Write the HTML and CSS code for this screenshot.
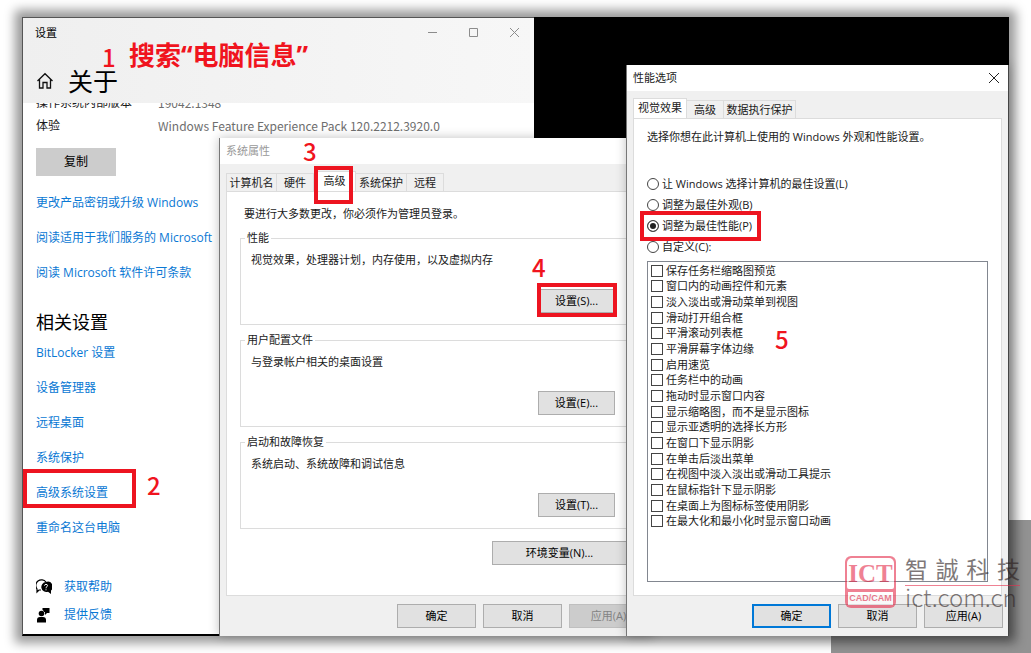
FILE: index.html
```html
<!DOCTYPE html>
<html lang="zh-CN">

<head>
    <meta charset="utf-8">
    <link rel="stylesheet" href="styles.css">
    <title>设置</title>
</head>

<body>
    <div class="backdrop"></div>
    <main class="desktop">
        <section class="settings">
            <header class="settings-head">
                <div class="caption">
                    <span>设置</span>
                    <svg class="controls" width="94" height="12" viewBox="0 0 94 12" fill="none" stroke="#8c8c8c">
                        <path d="M0 5.500H9M41.500 1.500H49.500V9.500H41.500ZM82 1L91 10M91 1L82 10" />
                    </svg>
                </div>
                <div class="heading">
                    <svg width="18" height="18" viewBox="0 0 18 18" fill="none" stroke="#111" stroke-width="1.300">
                        <path d="M1.500 9L9 1.700L16.500 9M3.500 7.500V16H7V10.500H11V16H14.500V7.500" />
                    </svg>
                    <h1>关于</h1>
                </div>
            </header>
            <div class="settings-body">
                <dl class="specs">
                    <dt>操作系统内部版本</dt>
                    <dd>19042.1348</dd>
                    <dt>体验</dt>
                    <dd>Windows Feature Experience Pack 120.2212.3920.0</dd>
                </dl>
                <button class="copy">复制</button>
                <nav class="links">
                    <a href="#">更改产品密钥或升级 Windows</a>
                    <a href="#">阅读适用于我们服务的 Microsoft</a>
                    <a href="#">阅读 Microsoft 软件许可条款</a>
                </nav>
                <h2>相关设置</h2>
                <nav class="links">
                    <a href="#">BitLocker 设置</a>
                    <a href="#">设备管理器</a>
                    <a href="#">远程桌面</a>
                    <a href="#">系统保护</a>
                    <a href="#">高级系统设置</a>
                    <a href="#">重命名这台电脑</a>
                </nav>
                <nav class="help">
                    <a href="#">
                        <svg width="16" height="16" viewBox="0 0 16 16">
                            <path d="M5 11H3L1 13V10A5 5 0 1 1 10 3" fill="none" stroke="#000" stroke-width="1.200" />
                            <path d="M10 3A5 5 0 1 0 12 12.700L15 15V11.500A5 5 0 0 0 10 3Z" fill="#000" />
                            <path d="M8.500 6.700Q8.700 5.300 10 5.300Q11.600 5.400 11.500 6.800Q11.300 7.700 10 8.500V9.300M10 10.300V11.300" fill="none" stroke="#fff" />
                        </svg>
                        获取帮助</a>
                    <a href="#">
                        <svg width="16" height="16" viewBox="0 0 16 16">
                            <path d="M1 15.500V13Q1 10 4 10H7Q10 10 10 13V15.500Z" />
                            <circle cx="5.500" cy="6.500" r="2.800" />
                            <path d="M6.500 1H13.500V6H11L9 8V5H8Q7.700 3.500 6.500 3Z" />
                        </svg>
                        提供反馈</a>
                </nav>
            </div>
        </section>

        <section class="dialog system">
            <header class="title inactive">系统属性</header>
            <div class="tabs" role="tablist">
                <button role="tab" class="tab wide">计算机名</button>
                <button role="tab" class="tab">硬件</button>
                <button role="tab" class="tab active" aria-selected="true">高级</button>
                <button role="tab" class="tab wide">系统保护</button>
                <button role="tab" class="tab">远程</button>
            </div>
            <div class="panel">
                <p class="note">要进行大多数更改，你必须作为管理员登录。</p>
                <fieldset>
                    <legend>性能</legend>
                    <p>视觉效果，处理器计划，内存使用，以及虚拟内存</p>
                    <button class="btn">设置(S)...</button>
                </fieldset>
                <fieldset>
                    <legend>用户配置文件</legend>
                    <p>与登录帐户相关的桌面设置</p>
                    <button class="btn">设置(E)...</button>
                </fieldset>
                <fieldset>
                    <legend>启动和故障恢复</legend>
                    <p>系统启动、系统故障和调试信息</p>
                    <button class="btn">设置(T)...</button>
                </fieldset>
                <button class="btn env">环境变量(N)...</button>
            </div>
            <footer class="actions">
                <button class="btn">确定</button>
                <button class="btn">取消</button>
                <button class="btn" disabled>应用(A)</button>
            </footer>
        </section>

        <section class="dialog performance">
            <header class="title">性能选项
                <svg width="10" height="10" viewBox="0 0 10 10" stroke="#222"><path d="M0 0L10 10M10 0L0 10" /></svg>
            </header>
            <div class="tabs" role="tablist">
                <button role="tab" class="tab active wide" aria-selected="true">视觉效果</button>
                <button role="tab" class="tab">高级</button>
                <button role="tab" class="tab widest">数据执行保护</button>
            </div>
            <div class="panel">
                <p>选择你想在此计算机上使用的 Windows 外观和性能设置。</p>
                <div class="radios">
                    <label><input type="radio" name="fx">让 Windows 选择计算机的最佳设置(L)</label>
                    <label><input type="radio" name="fx">调整为最佳外观(B)</label>
                    <label><input type="radio" name="fx" checked>调整为最佳性能(P)</label>
                    <label><input type="radio" name="fx">自定义(C):</label>
                </div>
                <div class="listbox">
                    <div class="checks">
                        <label><input type="checkbox">保存任务栏缩略图预览</label>
                        <label><input type="checkbox">窗口内的动画控件和元素</label>
                        <label><input type="checkbox">淡入淡出或滑动菜单到视图</label>
                        <label><input type="checkbox">滑动打开组合框</label>
                        <label><input type="checkbox">平滑滚动列表框</label>
                        <label><input type="checkbox">平滑屏幕字体边缘</label>
                        <label><input type="checkbox">启用速览</label>
                        <label><input type="checkbox">任务栏中的动画</label>
                        <label><input type="checkbox">拖动时显示窗口内容</label>
                        <label><input type="checkbox">显示缩略图，而不是显示图标</label>
                        <label><input type="checkbox">显示亚透明的选择长方形</label>
                        <label><input type="checkbox">在窗口下显示阴影</label>
                        <label><input type="checkbox">在单击后淡出菜单</label>
                        <label><input type="checkbox">在视图中淡入淡出或滑动工具提示</label>
                        <label><input type="checkbox">在鼠标指针下显示阴影</label>
                        <label><input type="checkbox">在桌面上为图标标签使用阴影</label>
                        <label><input type="checkbox">在最大化和最小化时显示窗口动画</label>
                    </div>
                </div>
            </div>
            <footer class="actions">
                <button class="btn default">确定</button>
                <button class="btn">取消</button>
                <button class="btn">应用(A)</button>
            </footer>
            <!-- marks that belong to this dialog -->
            <span class="box box-best"></span>
            <span class="step step5">5</span>
        </section>

        <!-- step marks -->
        <span class="step step1">1</span>
        <strong class="step search">搜索“电脑信息”</strong>
        <span class="step step2">2</span>
        <span class="step step3">3</span>
        <span class="step step4">4</span>
        <span class="box box-advanced"></span>
        <span class="box box-tab"></span>
        <span class="box box-button"></span>
    </main>

    <div class="watermark">
        <div class="logo">
            <b>ICT</b>
            <small>CAD/CAM</small>
        </div>
        <div class="brand">
            <div class="name"><span>智</span><span>誠</span><span>科</span><span>技</span></div>
            <div class="site">ict.com.cn</div>
        </div>
    </div>
</body>

</html>
```
FILE: styles.css
```css
* {
    box-sizing: border-box;
}

body {
    margin: 0;
    padding: 17px 22px;
    min-height: 100vh;
    position: relative;
    overflow: hidden;
    background-color: white;
    color: #1a1a1a;
    font-family: "Open Sans", "Noto Sans CJK SC", sans-serif;
    font-size: 11px;
    line-height: 16px;
}

h1, h2, p, dl, dd {
    margin: 0;
    font-weight: normal;
}

button {
    font: inherit;
    color: inherit;
    padding: 0;
    white-space: nowrap;
}

a {
    color: #0a78d4;
    text-decoration: none;
}

.backdrop {
    position: absolute;
    right: 0;
    bottom: 0;
    width: 200px;
    height: 133px;
    background-color: #929292;
}

.desktop {
    position: relative;
    min-height: calc(100vh - 34px);
    background-color: black;
    box-shadow: 0 0 10px 7px rgba(0, 0, 0, 0.4);
}

/* settings window */
.settings {
    position: absolute;
    top: 0;
    left: 0;
    bottom: 0;
    width: 512px;
    display: flex;
    flex-direction: column;
    border: 1px solid #555;
    border-right: 0;
    border-bottom: 2px solid black;
    background-color: white;
    font-size: 12px;
    line-height: 20px;
}

.settings-head {
    height: 85px;
    padding: 6px 12px 0;
    background: linear-gradient(90deg, #efefef, #f7f7f7);
    color: black;
}

.caption {
    display: flex;
    justify-content: space-between;
    align-items: center;
    height: 18px;
    font-size: 11px;
}

.heading {
    display: flex;
    align-items: center;
    gap: 14px;
    margin-top: 21px;
    padding-left: 1px;
}

.heading h1 {
    font-size: 25px;
    line-height: 36px;
}

.settings-body {
    flex: 1;
    overflow: hidden;
    padding-left: 13px;
}

.specs {
    display: grid;
    grid-template-columns: 122px 1fr;
    row-gap: 3px;
    margin-top: -10px;
}

.specs dd {
    color: #6e6e6e;
    font-family: "Noto Sans CJK SC", sans-serif;
}

.copy {
    display: block;
    width: 80px;
    height: 28px;
    margin: 12px 0 9px;
    border: 0;
    background-color: #ccc;
    color: black;
}

.links {
    display: flex;
    flex-direction: column;
    align-items: flex-start;
    line-height: 35px;
}

h2 {
    margin: 19px 0 0;
    color: black;
    font-size: 18px;
    line-height: 26px;
}

.help {
    margin-top: 28px;
    line-height: 28px;
}

.help a {
    display: flex;
    align-items: center;
    gap: 12px;
}

/* classic dialogs */
.dialog {
    position: absolute;
    bottom: 0;
    display: flex;
    flex-direction: column;
    border-left: 1px solid #777;
    background-color: #f0f0f0;
    box-shadow: 0 0 10px rgba(0, 0, 0, 0.25);
}

.system {
    top: 121px;
    left: 197px;
    width: 434px;
}

.performance {
    top: 48px;
    right: 0;
    width: 383px;
    border-right: 1px solid #444;
}

.title {
    display: flex;
    justify-content: space-between;
    align-items: center;
    height: 26px;
    padding: 0 9px 0 6px;
    background-color: white;
}

.title.inactive {
    color: #999;
}

.tabs {
    display: flex;
    align-items: flex-end;
    height: 27px;
    padding-left: 6px;
}

.tab {
    width: 37px;
    height: 18px;
    border: 1px solid #dcdcdc;
    border-width: 1px 1px 0 0;
    background-color: #f0f0f0;
}

.tab:first-child {
    border-left-width: 1px;
}

.tab.wide {
    width: 51px;
}

.tab.widest {
    width: 72px;
}

.tab.active {
    height: 21px;
    margin-bottom: -1px;
    padding-bottom: 3px;
    background-color: white;
}

.system .tab.active {
    width: 42px;
}

.performance .tab.active {
    width: 54px;
}

.panel {
    flex: 1;
    display: flex;
    flex-direction: column;
    margin: 0 6px;
    padding: 10px 13px 13px;
    border: 1px solid #dcdcdc;
    background-color: white;
}

.note {
    margin: 4px 4px 8px;
}

fieldset {
    margin: 0 0 7px;
    padding: 6px 17px 11px 10px;
    border: 1px solid #dcdcdc;
}

legend {
    margin-left: -6px;
    padding: 0 2px;
}

.btn {
    width: 79px;
    height: 24px;
    border: 1px solid #adadad;
    background-color: #e1e1e1;
    color: black;
}

.btn:disabled {
    border-color: #bfbfbf;
    background-color: #ccc;
    color: #838383;
}

.btn.default {
    border: 2px solid #0078d7;
}

fieldset .btn {
    display: block;
    width: 77px;
    margin: 21px 0 0 auto;
}

.env {
    width: 135px;
    margin: 5px 6px 0 auto;
}

.actions {
    display: flex;
    justify-content: flex-end;
    align-items: center;
    gap: 7px;
    height: 40px;
    padding-right: 5px;
}

.radios {
    margin: 28px 0 4px;
}

.radios label {
    display: flex;
    align-items: center;
    height: 21px;
    gap: 3px;
}

input {
    appearance: none;
    flex: none;
    width: 12px;
    height: 12px;
    margin: 0;
    border: 1px solid #444;
    background-color: white;
}

input[type="radio"] {
    border-radius: 50%;
}

input[type="radio"]:checked {
    background-color: #222;
    box-shadow: inset 0 0 0 2px white;
}

.listbox {
    flex: 1;
    padding: 1px 3px;
    border: 1px solid #828790;
}

.checks {
    display: grid;
    grid-template-rows: repeat(17, 1fr);
    height: 266px;
}

.checks label {
    display: flex;
    align-items: center;
    gap: 3px;
    min-height: 0;
}

/* red marks */
.step {
    position: absolute;
    color: #f0141e;
    font-family: "Noto Sans CJK SC", sans-serif;
    font-size: 24px;
    font-weight: 500;
    line-height: 28px;
}

.step1 {
    top: 26px;
    left: 80px;
}

.search {
    top: 24px;
    left: 107px;
    font-family: "Open Sans", "Noto Sans CJK SC", sans-serif;
    font-size: 26px;
    font-weight: 700;
}

.step2 {
    top: 454px;
    left: 125px;
}

.step3 {
    top: 120px;
    left: 281px;
}

.step4 {
    top: 236px;
    left: 510px;
}

.step5 {
    top: 260px;
    left: 148px;
}

.box {
    position: absolute;
    border: 4px solid #ed1420;
}

.box-advanced {
    top: 452px;
    left: 1px;
    width: 113px;
    height: 39px;
}

.box-tab {
    top: 149px;
    left: 292px;
    width: 39px;
    height: 38px;
}

.box-button {
    top: 266px;
    left: 515px;
    width: 80px;
    height: 34px;
}

.box-best {
    top: 146px;
    left: 13px;
    width: 121px;
    height: 30px;
}

/* watermark */
.watermark {
    position: absolute;
    right: 11px;
    bottom: 45px;
    display: flex;
    gap: 9px;
    opacity: 0.6;
}

.logo {
    display: flex;
    flex-direction: column;
    width: 51px;
    height: 52px;
    padding: 2px;
    border-radius: 6px;
    background-color: #e62e4d;
    color: #e62e4d;
    text-align: center;
}

.logo b {
    height: 31px;
    border-radius: 5px 5px 2px 2px;
    background-color: white;
    font-family: "Liberation Serif", serif;
    font-size: 25px;
    line-height: 31px;
}

.logo small {
    height: 13px;
    margin: 3px 1px 0;
    background-color: white;
    font-family: "Liberation Sans", sans-serif;
    font-size: 9px;
    font-weight: bold;
    line-height: 13px;
}

.brand {
    width: 115px;
    color: #2b1d1d;
}

.name {
    display: flex;
    justify-content: space-between;
    height: 30px;
    border-bottom: 1px solid #e62e4d;
    font-family: "Noto Sans CJK TC", sans-serif;
    font-size: 23px;
    font-weight: 400;
    line-height: 24px;
}

.site {
    font-family: "Noto Sans CJK SC", sans-serif;
    font-size: 24px;
    font-weight: 300;
    line-height: 22px;
}
```
